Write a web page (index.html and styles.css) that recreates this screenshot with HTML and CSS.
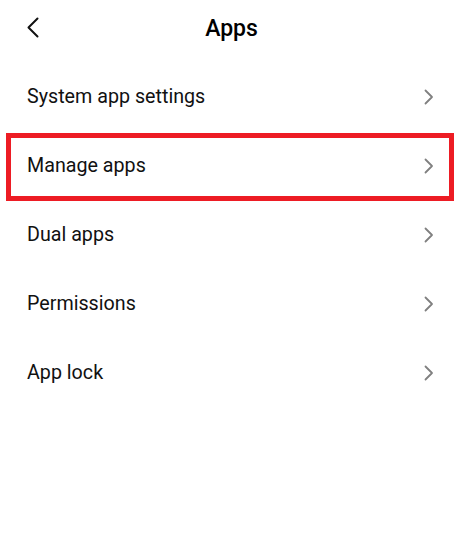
FILE: index.html
```html
<!DOCTYPE html>
<html lang="en">
<head>
<meta charset="utf-8">
<title>Apps</title>
<link rel="stylesheet" href="styles.css">
</head>
<body>
<div class="screen">
  <header class="header">
    <span class="back" aria-label="Back">
      <svg width="14" height="21" viewBox="0 0 14 21"><path d="M11.5 1.5 L2.5 10.5 L11.5 19.5" fill="none" stroke="#111" stroke-width="2" stroke-linecap="round" stroke-linejoin="round"/></svg>
    </span>
    <h1 class="title">Apps</h1>
  </header>
  <ul class="list">
    <li class="row"><span class="label">System app settings</span><svg class="chev" width="10" height="16" viewBox="0 0 10 16"><path d="M1.5 1.5 L8 8 L1.5 14.5" fill="none" stroke="#808080" stroke-width="1.8" stroke-linecap="round" stroke-linejoin="round"/></svg></li>
    <li class="row row-highlight"><span class="label">Manage apps</span><svg class="chev" width="10" height="16" viewBox="0 0 10 16"><path d="M1.5 1.5 L8 8 L1.5 14.5" fill="none" stroke="#808080" stroke-width="1.8" stroke-linecap="round" stroke-linejoin="round"/></svg></li>
    <li class="row"><span class="label">Dual apps</span><svg class="chev" width="10" height="16" viewBox="0 0 10 16"><path d="M1.5 1.5 L8 8 L1.5 14.5" fill="none" stroke="#808080" stroke-width="1.8" stroke-linecap="round" stroke-linejoin="round"/></svg></li>
    <li class="row"><span class="label">Permissions</span><svg class="chev" width="10" height="16" viewBox="0 0 10 16"><path d="M1.5 1.5 L8 8 L1.5 14.5" fill="none" stroke="#808080" stroke-width="1.8" stroke-linecap="round" stroke-linejoin="round"/></svg></li>
    <li class="row"><span class="label">App lock</span><svg class="chev" width="10" height="16" viewBox="0 0 10 16"><path d="M1.5 1.5 L8 8 L1.5 14.5" fill="none" stroke="#808080" stroke-width="1.8" stroke-linecap="round" stroke-linejoin="round"/></svg></li>
  </ul>
</div>
</body>
</html>
```
FILE: styles.css
```css
html, body {
  margin: 0;
  padding: 0;
  background: #ffffff;
}
body {
  font-family: Roboto, "Liberation Sans", Arial, sans-serif;
  color: #111111;
}
.screen {
  width: 463px;
  height: 542px;
  overflow: hidden;
}
.header {
  position: relative;
  height: 56px;
  display: flex;
  align-items: center;
  justify-content: center;
}
.back {
  position: absolute;
  left: 26px;
  top: 17px;
  display: flex;
}
.title {
  margin: 0;
  font-size: 23px;
  font-weight: 500;
  color: #000;
}
.list {
  list-style: none;
  margin: 6px 0 0 0;
  padding: 0;
}
.row {
  position: relative;
  height: 69px;
  display: flex;
  align-items: center;
  justify-content: space-between;
  padding: 0 29px 0 27px;
}
.label {
  font-size: 19.7px;
  font-weight: 400;
  color: #111;
}
.chev {
  display: block;
}
.row-highlight::after {
  content: "";
  position: absolute;
  left: 6px;
  right: 9px;
  top: 2px;
  bottom: -1px;
  border: 5px solid #ed1c24;
  pointer-events: none;
}
```
